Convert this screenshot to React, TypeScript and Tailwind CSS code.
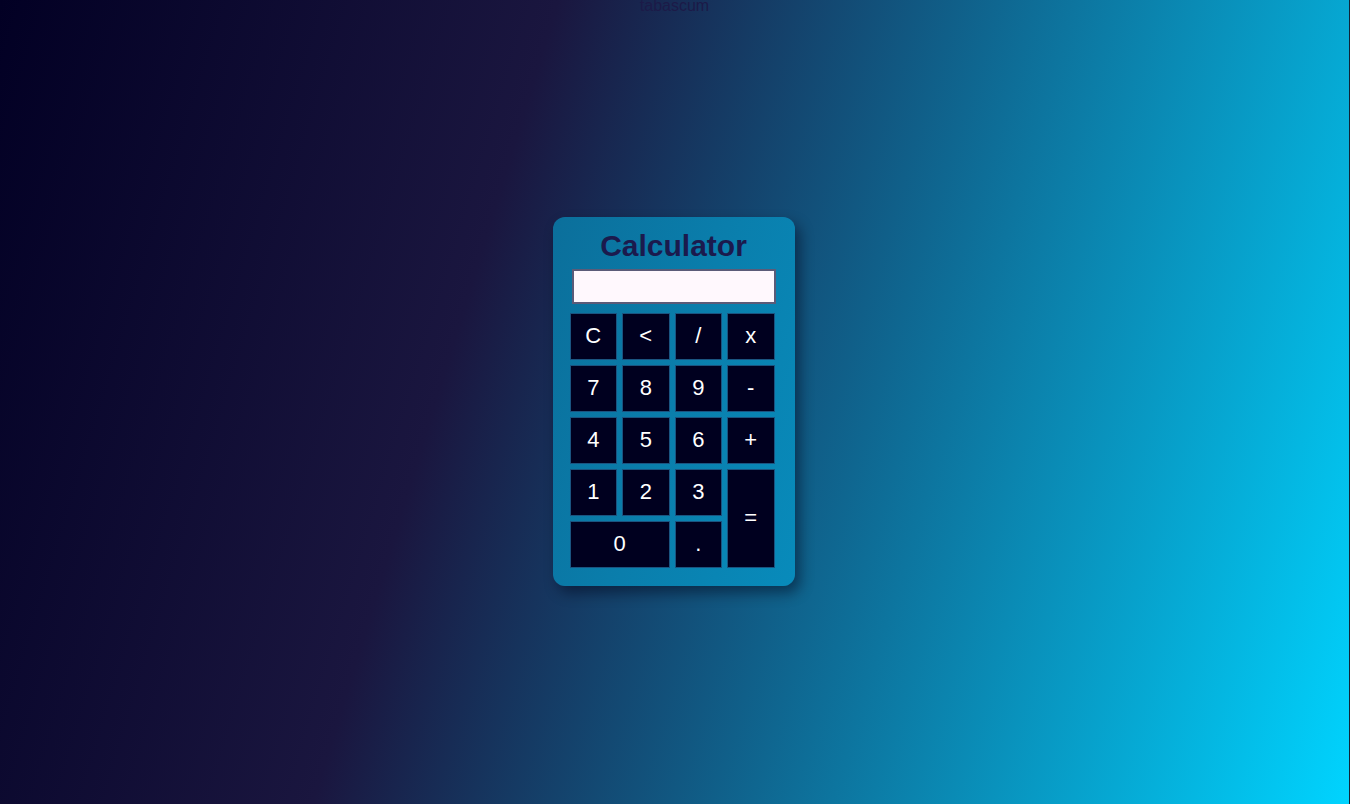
import React from 'react';

type Key = { label: string; span?: string };

const keys: Key[] = [
    { label: "C" }, { label: "<" }, { label: "/" }, { label: "x" },
    { label: "7" }, { label: "8" }, { label: "9" }, { label: "-" },
    { label: "4" }, { label: "5" }, { label: "6" }, { label: "+" },
    { label: "1" }, { label: "2" }, { label: "3" }, { label: "=", span: "row-span-2" },
    { label: "0", span: "col-span-2" }, { label: "." },
];

export default function App() {
    const [value, setValue] = React.useState("");

    const press = (k: string) => {
        if (k === "C") return setValue("");
        if (k === "<") return setValue(v => v.slice(0, -1));
        if (k === "=") {
            try {
                // eslint-disable-next-line no-new-func
                const out = Function(`return (${value.replace(/x/g, "*")})`)();
                setValue(String(out));
            } catch {
                setValue("Error");
            }
            return;
        }
        setValue(v => v + k);
    };

    return (
        <div className="bg-white font-['Liberation_Sans',Arial,sans-serif]">
            <main className="relative h-[804px] w-full flex items-center justify-center border-r border-[#0f2538] bg-[linear-gradient(107deg,#020024_0%,#1a163f_35%,#00d4ff_100%)]">
                <p className="absolute top-[-3px] left-0 right-0 text-center text-[16px] leading-[18px] text-[#1c1a48]">tabascum</p>

                <div className="mr-[2px] mb-[2px] w-[242px] pt-[12px] pb-[18px] rounded-[12px] bg-[linear-gradient(107deg,#0b6f9b_0%,#0a7eac_50%,#088bbb_100%)] shadow-[5px_7px_14px_rgba(0,0,20,0.45)]">
                    <h1 className="text-center text-[30px] leading-[34px] font-bold text-[#1b1a4d]">Calculator</h1>
                    <input
                        value={value}
                        readOnly
                        className="block mx-auto mt-[6px] w-[204px] h-[35px] px-2 bg-[#fff8fd] border-2 border-[#5b5b78] text-[20px] text-right text-[#1b1a4d] outline-none"
                    />
                    <div className="ml-[17px] mt-[9px] w-[205px] grid grid-cols-4 auto-rows-[47px] gap-[5px]">
                        {keys.map((k) => (
                            <button
                                key={k.label}
                                onClick={() => press(k.label)}
                                className={`${k.span ?? ""} flex items-center justify-center bg-[#00001f] border border-[#1a5480] text-white text-[22px] leading-none`}
                            >
                                {k.label}
                            </button>
                        ))}
                    </div>
                </div>
            </main>
        </div>
    );
}
